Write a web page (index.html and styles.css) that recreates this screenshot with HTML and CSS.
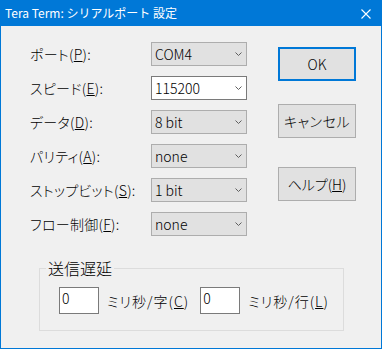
FILE: index.html
```html
<!DOCTYPE html>
<html lang="ja">
<head>
    <meta charset="UTF-8">
    <title>Tera Term: シリアルポート 設定</title>
    <link rel="stylesheet" href="styles.css">
</head>
<body>
    <div class="window">
        <div class="titlebar">
            <span class="title">Tera Term: シリアルポート 設定</span>
            <svg class="close" width="10" height="10" viewBox="0 0 10 10">
                <path d="M0.5 0.5 L9.5 9.5 M9.5 0.5 L0.5 9.5" stroke="#fff" stroke-width="1.1" fill="none"/>
            </svg>
        </div>
        <div class="content">
            <div class="main">
                <div class="form">
                    <label>ポート(<u>P</u>):</label>
                    <div class="combo">COM4<svg class="chev" width="7" height="4" viewBox="0 0 7 4"><polyline points="0.5,0.5 3.5,3.5 6.5,0.5"/></svg></div>
                    <label>スピード(<u>E</u>):</label>
                    <div class="combo editable">115200<svg class="chev" width="7" height="4" viewBox="0 0 7 4"><polyline points="0.5,0.5 3.5,3.5 6.5,0.5"/></svg></div>
                    <label>データ(<u>D</u>):</label>
                    <div class="combo">8 bit<svg class="chev" width="7" height="4" viewBox="0 0 7 4"><polyline points="0.5,0.5 3.5,3.5 6.5,0.5"/></svg></div>
                    <label>パリティ(<u>A</u>):</label>
                    <div class="combo">none<svg class="chev" width="7" height="4" viewBox="0 0 7 4"><polyline points="0.5,0.5 3.5,3.5 6.5,0.5"/></svg></div>
                    <label>ストップビット(<u>S</u>):</label>
                    <div class="combo">1 bit<svg class="chev" width="7" height="4" viewBox="0 0 7 4"><polyline points="0.5,0.5 3.5,3.5 6.5,0.5"/></svg></div>
                    <label>フロー制御(<u>F</u>):</label>
                    <div class="combo">none<svg class="chev" width="7" height="4" viewBox="0 0 7 4"><polyline points="0.5,0.5 3.5,3.5 6.5,0.5"/></svg></div>
                </div>
                <div class="buttons">
                    <div class="btn default">OK</div>
                    <div class="btn cancel">キャンセル</div>
                    <div class="btn help">ヘルプ(<u>H</u>)</div>
                </div>
            </div>
            <fieldset class="group">
                <legend>送信遅延</legend>
                <div class="delay-row">
                    <div class="edit">0</div>
                    <span class="unit">ミリ秒/字(<u>C</u>)</span>
                    <div class="edit second">0</div>
                    <span class="unit">ミリ秒/行(<u>L</u>)</span>
                </div>
            </fieldset>
        </div>
    </div>
</body>
</html>
```

FILE: styles.css
```css
* { box-sizing: border-box; }
body {
    margin: 0;
    font-family: "Noto Sans CJK JP", "Noto Sans", sans-serif;
    font-size: 14px;
    font-weight: 300;
    font-feature-settings: "palt";
    color: #000;
    background: #f0f0f0;
}
u { text-decoration: underline; text-underline-offset: 1px; }

.window {
    width: 382px;
    height: 349px;
    border: 1px solid #0078d7;
    background: #f0f0f0;
    display: flex;
    flex-direction: column;
}
.titlebar {
    height: 25px;
    background: #0078d7;
    color: #fff;
    font-size: 12px;
    font-weight: 400;
    font-feature-settings: normal;
    display: flex;
    align-items: center;
    justify-content: space-between;
    padding: 0 10px 0 4px;
}
.title { line-height: 1; margin-top: -1px; }

.content {
    padding: 16px 0 0 29px;
}
.main {
    display: flex;
}
.form {
    display: grid;
    grid-template-columns: 121px 96px;
    grid-auto-rows: 24px;
    row-gap: 10px;
    align-items: center;
}
.form label {
    line-height: 1;
    white-space: nowrap;
    letter-spacing: 0.3px;
}
.combo {
    height: 24px;
    background: #e1e1e1;
    border: 1px solid #adadad;
    display: flex;
    align-items: center;
    justify-content: space-between;
    padding: 0 4px 0 3px;
    line-height: 1;
}
.combo.editable {
    background: #fff;
    border-color: #7a7a7a;
}
.chev polyline {
    fill: none;
    stroke: #5f5f5f;
    stroke-width: 1;
}

.buttons {
    margin-left: 31px;
    padding-top: 5px;
    display: flex;
    flex-direction: column;
}
.btn {
    width: 78px;
    height: 34px;
    background: #e1e1e1;
    border: 1px solid #adadad;
    display: flex;
    align-items: center;
    justify-content: center;
    line-height: 1;
}
.btn.default { border: 2px solid #0078d7; }
.btn.cancel { margin-top: 23px; letter-spacing: 0.5px; }
.btn.help { margin-top: 29px; }

.group {
    margin: 24px 0 0 9px;
    width: 305px;
    height: 71px;
    border: 1px solid #dcdcdc;
    padding: 11px 0 0 6px;
}
.group legend {
    padding: 0 2px;
    line-height: 16px;
    font-size: 16px;
}
.delay-row {
    display: flex;
    align-items: center;
    margin-left: 13px;
}
.edit {
    width: 40px;
    height: 27px;
    background: #fff;
    border: 1px solid #7a7a7a;
    padding: 3px 0 0 2px;
    line-height: 1;
    margin-right: 8px;
}
.edit.second { margin-left: 11px; }
.unit { line-height: 1; letter-spacing: 1px; }
```
